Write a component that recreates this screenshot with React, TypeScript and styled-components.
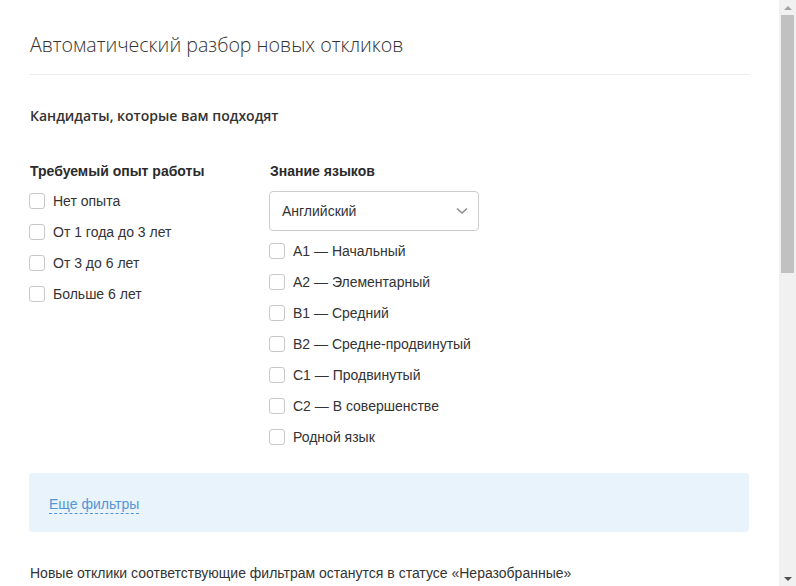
import styled, { createGlobalStyle } from 'styled-components';

const experience = ['Нет опыта', 'От 1 года до 3 лет', 'От 3 до 6 лет', 'Больше 6 лет'];
const levels = [
  'A1 — Начальный',
  'A2 — Элементарный',
  'B1 — Средний',
  'B2 — Средне-продвинутый',
  'C1 — Продвинутый',
  'C2 — В совершенстве',
  'Родной язык',
];

export default function App() {
  return (
    <Window>
      <GlobalStyle />
      <Page>
        <Title>Автоматический разбор новых откликов</Title>
        <Divider />
        <Subtitle>Кандидаты, которые вам подходят</Subtitle>
        <Columns>
          <Column>
            <ColumnTitle>Требуемый опыт работы</ColumnTitle>
            <List>
              {experience.map((item) => (
                <CheckRow key={item}>
                  <Box />
                  {item}
                </CheckRow>
              ))}
            </List>
          </Column>
          <Column>
            <ColumnTitle>Знание языков</ColumnTitle>
            <Select>
              Английский
              <svg width="12" height="8" viewBox="0 0 12 8">
                <path d="M1 1.5l5 4.5 5-4.5" fill="none" stroke="#8a8a8a" strokeWidth="1.6" />
              </svg>
            </Select>
            <List>
              {levels.map((item) => (
                <CheckRow key={item}>
                  <Box />
                  {item}
                </CheckRow>
              ))}
            </List>
          </Column>
        </Columns>
        <FiltersPanel>
          <MoreLink>Еще фильтры</MoreLink>
        </FiltersPanel>
        <Note>Новые отклики соответствующие фильтрам останутся в статусе «Неразобранные»</Note>
      </Page>
      <Scrollbar>
        <Arrow $up />
        <Track>
          <Thumb />
        </Track>
        <Arrow />
      </Scrollbar>
    </Window>
  );
}

const GlobalStyle = createGlobalStyle`
  html, body {
    margin: 0;
    padding: 0;
    background: #fff;
    overflow: hidden;
  }
`;

const Window = styled.div`
  display: flex;
  width: 796px;
  height: 586px;
  overflow: hidden;
`;

const Page = styled.div`
  flex: 1;
  padding: 30px 30px 0 29px;
  color: #333;
  font-family: 'Liberation Sans', Arial, sans-serif;
`;

const Title = styled.h1`
  margin: 0;
  padding-left: 1px;
  font-family: 'Open Sans', sans-serif;
  font-weight: 300;
  font-size: 19.6px;
  line-height: 30px;
  color: #333;
`;

const Divider = styled.div`
  height: 1px;
  margin-top: 14px;
  background: #ebebeb;
`;

const Subtitle = styled.h2`
  margin: 31px 0 0;
  padding-left: 1px;
  font-family: 'Open Sans', sans-serif;
  font-weight: 600;
  font-size: 14px;
  line-height: 20px;
  color: #333;
`;

const Columns = styled.div`
  display: grid;
  grid-template-columns: 240px 210px;
  margin-top: 35px;
`;

const Column = styled.div`
  display: flex;
  flex-direction: column;
`;

const ColumnTitle = styled.div`
  padding-left: 1px;
  font-weight: 700;
  font-size: 14px;
  line-height: 20px;
  color: #2b2b2b;
`;

const Select = styled.div`
  display: flex;
  align-items: center;
  justify-content: space-between;
  box-sizing: border-box;
  height: 40px;
  margin-top: 10px;
  padding: 0 10px 0 12px;
  border: 1px solid #ccc;
  border-radius: 4px;
  font-size: 14px;
  color: #333;
`;

const List = styled.div`
  display: flex;
  flex-direction: column;
  margin-top: 4px;
`;

const CheckRow = styled.label`
  display: flex;
  align-items: center;
  gap: 8px;
  height: 31px;
  font-size: 14px;
  color: #333;
`;

const Box = styled.span`
  box-sizing: border-box;
  width: 16px;
  height: 16px;
  border: 1px solid #c8c8c8;
  border-radius: 3px;
  background: #fff;
`;

const FiltersPanel = styled.div`
  display: flex;
  align-items: center;
  box-sizing: border-box;
  height: 59px;
  margin-top: 21px;
  padding: 3px 20px 0;
  background: #e8f3fc;
  border-radius: 4px;
`;

const MoreLink = styled.span`
  font-size: 14px;
  line-height: 18px;
  color: #5495d6;
  border-bottom: 1px dashed #5495d6;
`;

const Note = styled.p`
  margin: 31px 0 0;
  padding-left: 1px;
  font-size: 14px;
  line-height: 20px;
  color: #333;
`;

const Scrollbar = styled.div`
  display: flex;
  flex-direction: column;
  width: 17px;
  background: #f1f1f1;
`;

const Track = styled.div`
  flex: 1;
  padding: 0 2px;
`;

const Thumb = styled.div`
  height: 258px;
  background: #c1c1c1;
`;

const Arrow = styled.div<{ $up?: boolean }>`
  height: 15px;
  display: flex;
  align-items: center;
  justify-content: center;

  &::before {
    content: '';
    border-left: 4px solid transparent;
    border-right: 4px solid transparent;
    ${(p) => (p.$up ? 'border-bottom: 4px solid #a3a3a3;' : 'border-top: 4px solid #505050;')}
  }
`;
